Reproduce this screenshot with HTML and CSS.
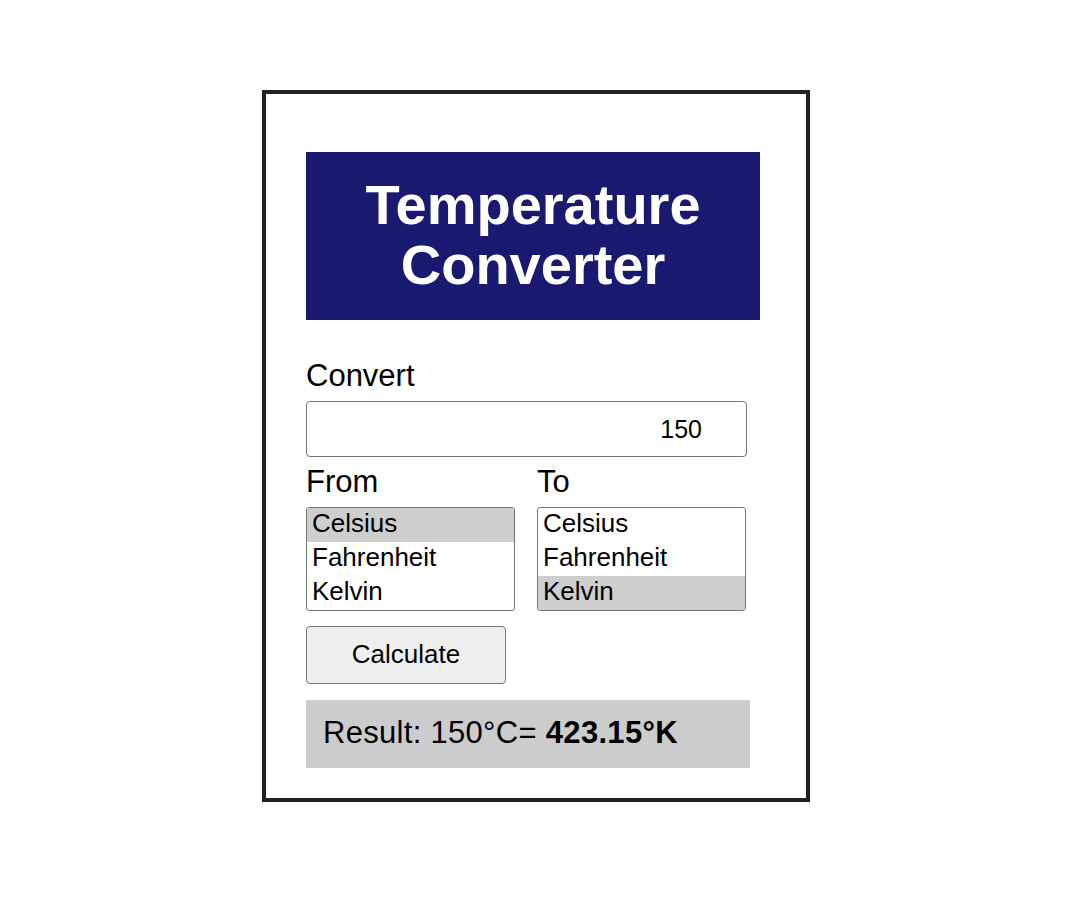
FILE: index.html
```html
<!DOCTYPE html>
<html lang="en">
<head>
<meta charset="utf-8">
<title>Temperature Converter</title>
<link rel="stylesheet" href="styles.css">
</head>
<body>
<div class="card">
  <h1 class="title">Temperature Converter</h1>
  <label class="label label-convert" for="value">Convert</label>
  <input class="value-input" id="value" type="text" value="150">
  <div class="units">
    <div class="unit-col">
      <div class="label label-unit">From</div>
      <ul class="listbox" role="listbox">
        <li class="option selected">Celsius</li>
        <li class="option">Fahrenheit</li>
        <li class="option">Kelvin</li>
      </ul>
    </div>
    <div class="unit-col">
      <div class="label label-unit">To</div>
      <ul class="listbox" role="listbox">
        <li class="option">Celsius</li>
        <li class="option">Fahrenheit</li>
        <li class="option selected">Kelvin</li>
      </ul>
    </div>
  </div>
  <button class="calc-btn" type="button">Calculate</button>
  <div class="result">Result: 150°C= <strong>423.15°K</strong></div>
</div>
</body>
</html>
```

FILE: styles.css
```css
html, body {
  margin: 0;
  padding: 0;
  background: #ffffff;
}

body {
  font-family: "Liberation Sans", Arial, sans-serif;
  color: #000000;
}

.card {
  box-sizing: border-box;
  width: 548px;
  margin: 90px 0 0 262px;
  border: 4px solid #222226;
  padding: 58px 46px 30px 40px;
  display: flex;
  flex-direction: column;
  align-items: flex-start;
}

.title {
  box-sizing: border-box;
  width: 454px;
  height: 168px;
  margin: 0;
  padding: 23px 20px 0;
  background: #191970;
  color: #ffffff;
  font-size: 56px;
  font-weight: bold;
  text-align: center;
  line-height: 60px;
}

.label {
  display: block;
  font-size: 31px;
  line-height: 35px;
}

.label-convert {
  margin-top: 38px;
}

.value-input {
  box-sizing: border-box;
  width: 441px;
  height: 56px;
  margin: 8px 0 0;
  padding: 0 44px 0 10px;
  border: 1px solid #767676;
  border-radius: 4px;
  font-family: "Liberation Sans", Arial, sans-serif;
  font-size: 25px;
  text-align: right;
  color: #000000;
  background: #ffffff;
  outline: none;
}

.units {
  display: flex;
  gap: 22px;
  margin-top: 7px;
}

.unit-col {
  display: flex;
  flex-direction: column;
  width: 209px;
}

.label-unit {
  margin-bottom: 8px;
}

.listbox {
  box-sizing: border-box;
  width: 209px;
  margin: 0;
  padding: 0;
  list-style: none;
  border: 1px solid #767676;
  border-radius: 3px;
  overflow: hidden;
}

.option {
  box-sizing: border-box;
  height: 34px;
  line-height: 31px;
  padding-left: 5px;
  font-size: 26px;
}

.option.selected {
  background: #cecece;
}

.calc-btn {
  box-sizing: border-box;
  width: 200px;
  height: 58px;
  margin-top: 15px;
  border: 1px solid #767676;
  border-radius: 4px;
  background: #efefef;
  font-family: "Liberation Sans", Arial, sans-serif;
  font-size: 26px;
  color: #000000;
  padding: 0 0 2px;
}

.result {
  box-sizing: border-box;
  width: 444px;
  height: 68px;
  margin-top: 16px;
  padding-left: 17px;
  background: #cccccc;
  font-size: 31px;
  letter-spacing: 0.3px;
  line-height: 65px;
  white-space: nowrap;
}

.result strong {
  font-weight: bold;
}
```
